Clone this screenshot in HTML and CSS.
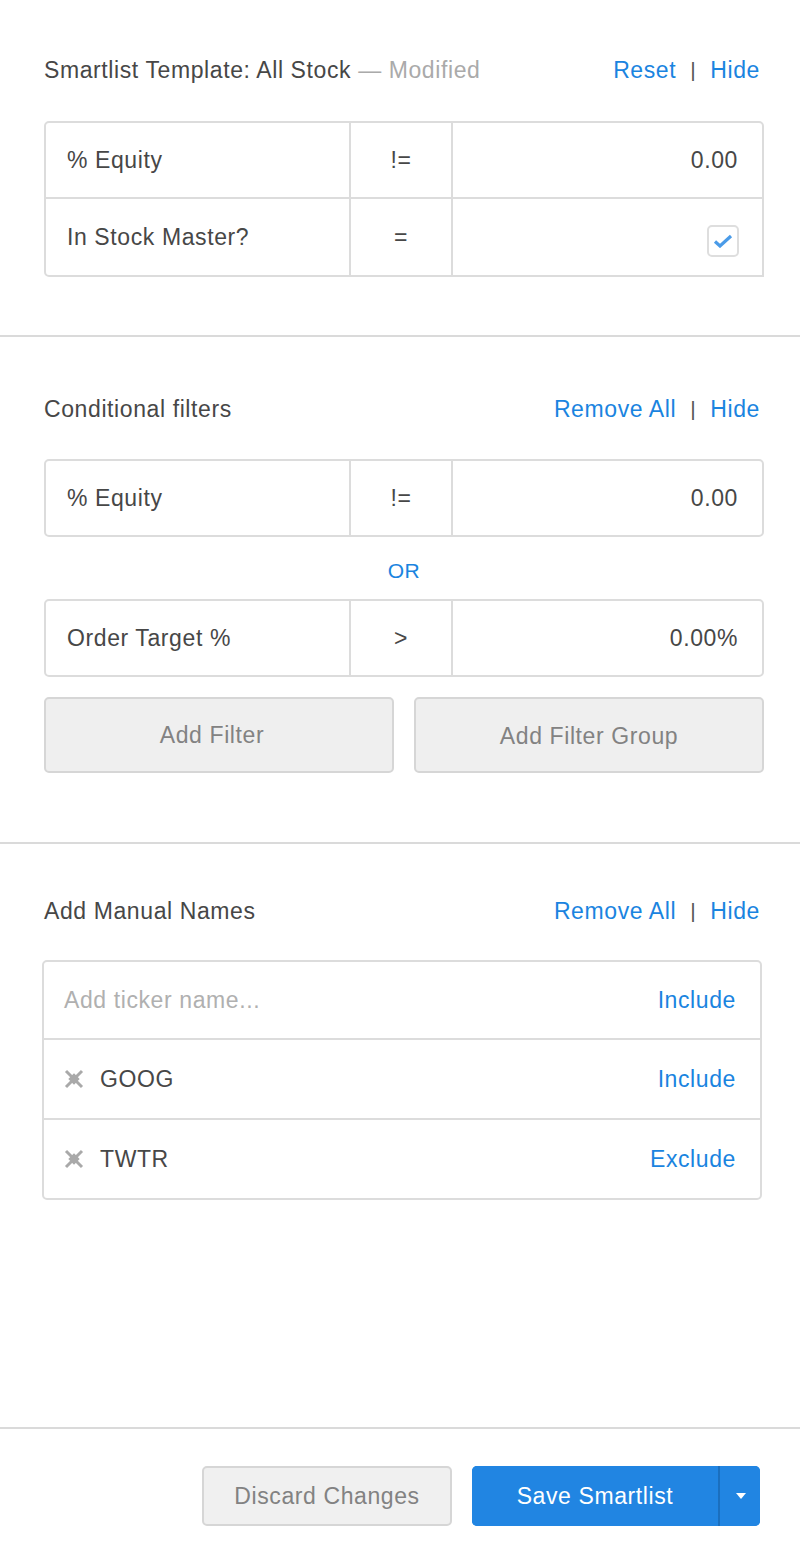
FILE: index.html
```html
<!DOCTYPE html>
<html>
<head>
<meta charset="utf-8">
<link rel="stylesheet" href="styles.css">
</head>
<body>
<div class="page">
  <main class="main">
    <section class="section section-template">
      <div class="sec-head">
        <div class="sec-title">Smartlist Template: All Stock <span class="muted">— Modified</span></div>
        <div class="sec-links"><a class="link">Reset</a><span class="bar">|</span><a class="link">Hide</a></div>
      </div>
      <div class="ftable ftable-open">
        <div class="frow">
          <div class="fcell fname">% Equity</div>
          <div class="fcell fop">!=</div>
          <div class="fcell fval">0.00</div>
        </div>
        <div class="frow">
          <div class="fcell fname">In Stock Master?</div>
          <div class="fcell fop">=</div>
          <div class="fcell fval">
            <span class="checkbox">
              <svg width="20" height="14" viewBox="0 0 20 14"><path d="M2 7.5 L7 12 L18 2" fill="none" stroke="#4a9be8" stroke-width="3.2" stroke-linejoin="miter"/></svg>
            </span>
          </div>
        </div>
      </div>
    </section>

    <section class="section section-cond">
      <div class="sec-head">
        <div class="sec-title">Conditional filters</div>
        <div class="sec-links"><a class="link">Remove All</a><span class="bar">|</span><a class="link">Hide</a></div>
      </div>
      <div class="ftable">
        <div class="frow">
          <div class="fcell fname">% Equity</div>
          <div class="fcell fop">!=</div>
          <div class="fcell fval">0.00</div>
        </div>
      </div>
      <div class="or">OR</div>
      <div class="ftable">
        <div class="frow">
          <div class="fcell fname">Order Target %</div>
          <div class="fcell fop">&gt;</div>
          <div class="fcell fval">0.00%</div>
        </div>
      </div>
      <div class="btn-row">
        <button class="btn btn-gray btn-filter">Add Filter</button>
        <button class="btn btn-gray btn-group">Add Filter Group</button>
      </div>
    </section>

    <section class="section section-manual">
      <div class="sec-head">
        <div class="sec-title">Add Manual Names</div>
        <div class="sec-links"><a class="link">Remove All</a><span class="bar">|</span><a class="link">Hide</a></div>
      </div>
      <div class="mlist">
        <div class="mrow">
          <span class="placeholder">Add ticker name...</span>
          <a class="link">Include</a>
        </div>
        <div class="mrow">
          <span class="ticker">
            <svg class="xicon" width="20" height="20" viewBox="0 0 20 20"><path d="M2 2 L18 18 M18 2 L2 18" stroke="#a9a9a9" stroke-width="3"/><rect x="6" y="6" width="8" height="8" transform="rotate(45 10 10)" fill="#a9a9a9"/></svg>
            GOOG
          </span>
          <a class="link">Include</a>
        </div>
        <div class="mrow">
          <span class="ticker">
            <svg class="xicon" width="20" height="20" viewBox="0 0 20 20"><path d="M2 2 L18 18 M18 2 L2 18" stroke="#a9a9a9" stroke-width="3"/><rect x="6" y="6" width="8" height="8" transform="rotate(45 10 10)" fill="#a9a9a9"/></svg>
            TWTR
          </span>
          <a class="link">Exclude</a>
        </div>
      </div>
    </section>
  </main>

  <footer class="footer">
    <button class="btn btn-gray btn-discard">Discard Changes</button>
    <div class="split">
      <button class="btn-save">Save Smartlist</button>
      <button class="btn-caret"><svg width="10" height="6" viewBox="0 0 10 6"><path d="M0 0 H10 L5 6 Z" fill="#fff"/></svg></button>
    </div>
  </footer>
</div>
</body>
</html>
```

FILE: styles.css
```css
* { box-sizing: border-box; }

html, body {
  margin: 0;
  padding: 0;
  background: #fff;
}

body {
  font-family: "Liberation Sans", Arial, sans-serif;
  font-size: 23px;
  letter-spacing: 0.6px;
  color: #474747;
}

.page {
  min-height: 1564px;
  display: flex;
  flex-direction: column;
}

.main {
  flex: 1;
}

.section {
  padding: 55px 40px 0 44px;
  border-bottom: 2px solid #dadada;
}

.section-template { padding-bottom: 58px; }
.section-cond { padding-top: 57px; padding-bottom: 69px; }
.section-manual { border-bottom: none; padding-top: 52px; }

.sec-head {
  display: flex;
  justify-content: space-between;
  align-items: center;
  height: 30px;
  margin-bottom: 36px;
}

.section-cond .sec-head { margin-bottom: 35px; }
.section-manual .sec-head { margin-bottom: 34px; }

.sec-title {
  color: #474747;
  white-space: nowrap;
}

.muted { color: #aaa; }

.sec-links {
  display: flex;
  align-items: center;
}

.link {
  color: #1a84e0;
  text-decoration: none;
  cursor: pointer;
}

.bar {
  color: #555;
  margin: 0 14px 0 14px;
  font-size: 21px;
}

.ftable {
  border: 2px solid #dcdcdc;
  border-radius: 5px;
  margin-right: -4px;
}

.ftable-open {
  border-bottom-right-radius: 0;
}

.frow {
  display: grid;
  grid-template-columns: 305px 102px 1fr;
  height: 78px;
}

.frow + .frow {
  border-top: 2px solid #dcdcdc;
}

.ftable .frow:first-child { height: 74px; }

.fcell {
  display: flex;
  align-items: center;
}

.fname {
  padding-left: 21px;
  border-right: 2px solid #dcdcdc;
}

.fop {
  justify-content: center;
  border-right: 2px solid #dcdcdc;
}

.fval {
  justify-content: flex-end;
  padding-right: 24px;
}

.checkbox {
  width: 32px;
  height: 32px;
  border: 2px solid #dedede;
  border-radius: 5px;
  display: flex;
  align-items: center;
  justify-content: center;
  margin-right: -1px;
  margin-top: 8px;
}

.or {
  color: #1a84e0;
  text-align: center;
  height: 62px;
  line-height: 62px;
  padding-top: 3px;
  font-size: 21px;
  margin-right: -4px;
}

.btn-row {
  display: grid;
  grid-template-columns: 1fr 1fr;
  gap: 20px;
  margin-top: 20px;
  margin-right: -4px;
}

.btn {
  font-family: "Liberation Sans", Arial, sans-serif;
  font-size: 23px;
  letter-spacing: 0.6px;
  cursor: pointer;
}

.btn-gray {
  height: 76px;
  background: #efefef;
  border: 2px solid #d6d6d6;
  border-radius: 5px;
  color: #828282;
  padding: 0;
}

.btn-filter { padding-right: 14px; }
.btn-group { padding-top: 3px; }

.mlist {
  border: 2px solid #dcdcdc;
  border-radius: 5px;
  margin-left: -2px;
  margin-right: -2px;
}

.mrow {
  display: flex;
  justify-content: space-between;
  align-items: center;
  height: 76px;
  padding: 0 24px 0 20px;
}

.mrow + .mrow {
  border-top: 2px solid #dcdcdc;
  height: 80px;
}

.placeholder {
  color: #b0b0b0;
}

.ticker {
  display: flex;
  align-items: center;
  color: #474747;
}

.xicon {
  margin-right: 16px;
}

.footer {
  border-top: 2px solid #dadada;
  display: flex;
  justify-content: flex-end;
  gap: 20px;
  padding: 37px 40px 38px 0;
}

.btn-discard {
  flex: none;
  width: 250px;
  height: 60px;
  background: #f0f0f0;
  color: #828282;
}

.split {
  display: flex;
  height: 60px;
  background: #2185e2;
  border-radius: 5px;
  overflow: hidden;
}

.btn-save {
  width: 246px;
  height: 60px;
  border: none;
  background: #2185e2;
  color: #fff;
  font-family: "Liberation Sans", Arial, sans-serif;
  font-size: 23px;
  letter-spacing: 0.6px;
  padding: 0;
}

.btn-caret {
  width: 42px;
  height: 60px;
  border: none;
  border-left: 2px solid #1a6fbf;
  background: #2185e2;
  display: flex;
  align-items: center;
  justify-content: center;
  padding: 0 0 0 2px;
}
```
